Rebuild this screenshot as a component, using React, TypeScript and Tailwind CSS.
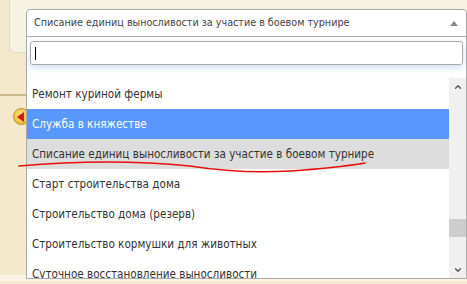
import { ChevronDown, ChevronUp } from "lucide-react";

const items = [
    { label: "Ремонт куриной фермы" },
    { label: "Служба в княжестве", active: true },
    { label: "Списание единиц выносливости за участие в боевом турнире", selected: true },
    { label: "Старт строительства дома" },
    { label: "Строительство дома (резерв)" },
    { label: "Строительство кормушки для животных" },
    { label: "Суточное восстановление выносливости" },
];

const font = { fontFamily: '"DejaVu Sans Condensed", "DejaVu Sans", sans-serif' };

export default function App() {
    return (
        <div
            className="relative w-[467px] h-[284px] overflow-hidden bg-[#f4e8cd]"
            style={font}
        >
            {/* page behind the open dropdown */}
            <div className="ml-[9px] h-[53px] rounded-bl-[5px] border-l border-b border-[#e3d9bf] bg-[#f6f3e3]" />
            <div className="mt-[41px] w-[26px] h-[2px] bg-[#c9ba8e]" />
            <div className="mt-[12px] ml-[13px] flex h-[17px] w-[17px] items-center justify-center rounded-full border border-[#c08a1c] bg-[radial-gradient(circle_at_40%_35%,#ffe27a,#e9a923)]">
                <span className="h-0 w-0 border-y-[5px] border-r-[7px] border-y-transparent border-r-[#d41a0c] -ml-[3px]" />
            </div>
            <div className="mt-[150px] h-[6px] bg-[#faf3e6]" />

            {/* select2 dropdown */}
            <div className="absolute left-[26px] top-[9px] w-[441px] h-[270px] flex flex-col bg-white border border-[#aaa] rounded-t-[4px]">
                <div className="flex h-[27px] items-center justify-between border-b border-[#aaa] pl-[7px] pr-[7px] text-[10.7px] text-[#444]">
                    <span>Списание единиц выносливости за участие в боевом турнире</span>
                    <span className="h-0 w-0 border-x-[4px] border-b-[5px] border-x-transparent border-b-[#888] mr-[1px]" />
                </div>
                <div className="px-[3px] pt-[4px]">
                    <div className="flex h-[24px] items-center rounded-[3px] border border-[#aaa] px-[4px] shadow-[0_3px_6px_rgba(120,170,220,0.35)]">
                        <span className="h-[13px] w-px bg-black" />
                    </div>
                </div>
                <div className="mt-[13px] flex min-h-0 flex-1">
                    <div className="flex-1 overflow-hidden pt-px text-[11.6px] text-[#333]">
                        {items.map((item) => (
                            <div
                                key={item.label}
                                className={
                                    "flex h-[30px] shrink-0 items-center whitespace-nowrap pl-[5px] pt-[2px] " +
                                    (item.active ? "bg-[#5897fb] text-white" : item.selected ? "bg-[#ddd]" : "")
                                }
                            >
                                {item.label}
                            </div>
                        ))}
                    </div>
                    <div className="flex w-[17px] flex-col bg-[#f0f0f0]">
                        <div className="flex h-[17px] items-center justify-center text-[#505050]">
                            <ChevronUp size={10} strokeWidth={3} />
                        </div>
                        <div className="flex-1 pt-[124px]">
                            <div className="h-[18px] bg-[#cdcdcd]" />
                        </div>
                        <div className="flex h-[17px] items-center justify-center text-[#505050]">
                            <ChevronDown size={10} strokeWidth={3} />
                        </div>
                    </div>
                </div>
            </div>

            {/* hand-drawn red underline */}
            <svg className="absolute left-0 top-0" width="467" height="284">
                <path
                    d="M19 166 Q 110 158 190 166 Q 240 174 290 171 Q 335 168 365 163"
                    fill="none"
                    stroke="#e8100c"
                    strokeWidth="1.6"
                    strokeLinecap="round"
                />
            </svg>
        </div>
    );
}
